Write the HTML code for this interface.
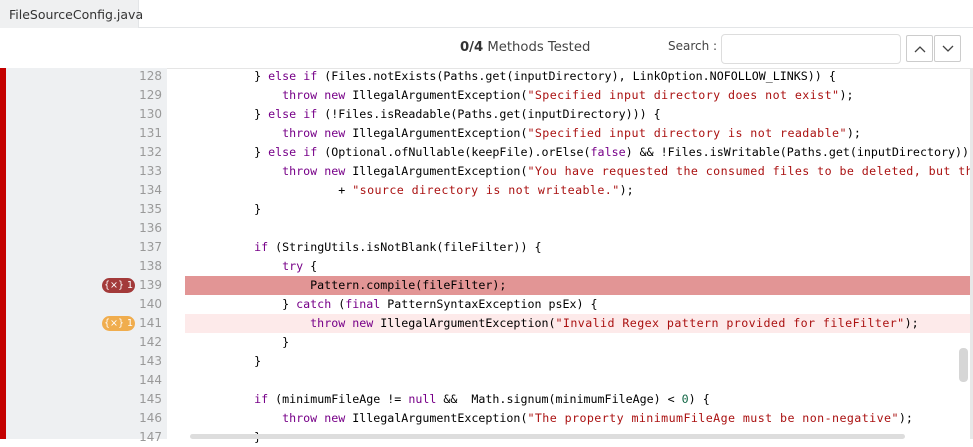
<!DOCTYPE html>
<html><head><meta charset="utf-8">
<style>
*{margin:0;padding:0;box-sizing:border-box}
body{width:973px;height:439px;overflow:hidden;background:#fff;font-family:"Liberation Sans","DejaVu Sans",sans-serif;position:relative}
.tabbar{position:absolute;left:0;top:0;width:973px;height:28px;background:#fff;border-bottom:1px solid #e3e5e7}
.tab{position:absolute;left:0;top:0;width:139px;height:28px;background:#eff0f1;border-right:1px solid #e3e5e7;color:#333;padding:7px 0 0 9px;font-family:"DejaVu Sans",sans-serif;font-size:12.5px}
.title{position:absolute;left:460px;top:40px;font-size:13.2px;color:#444;font-family:"DejaVu Sans",sans-serif}
.title b{color:#333}
.slabel{position:absolute;left:668px;top:39px;font-size:12px;color:#444;font-family:"DejaVu Sans",sans-serif}
.sbox{position:absolute;left:721px;top:34px;width:180px;height:30px;border:1px solid #ddd;border-radius:4px}
.btn{position:absolute;top:35px;width:27px;height:27px;border:1px solid #ccc;border-radius:2px}
.btn svg{position:absolute;left:7px;top:9px}
.hdrline{position:absolute;left:0;top:68px;width:973px;height:1px;background:#e5e5e5}
.redbar{position:absolute;left:0;top:68px;width:6px;height:371px;background:#c40000}
.gutter{position:absolute;left:6px;top:68px;width:161px;height:371px;background:#eef0f2}
.code{position:absolute;left:0;top:67px;width:973px}
.ln{position:relative;height:19px}
.num{position:absolute;right:811px;top:0;line-height:19px;font-family:"DejaVu Sans",sans-serif;font-size:12px;color:#999}
pre{position:absolute;left:170px;top:0;line-height:19px;font-family:"DejaVu Sans Mono",monospace;font-size:11.65px;color:#000}
.k{color:#708}.s{color:#a11;letter-spacing:0.42px}.n{color:#164}
.hl{position:absolute;left:185px;top:0;width:786px;height:19px}
.badge{position:absolute;left:102px;top:2px;width:33px;height:15px;border-radius:8px;color:#fff;font-size:9.5px;line-height:15px;text-align:center;font-family:"DejaVu Sans",sans-serif}
.vs{position:absolute;left:959px;top:348px;width:9px;height:34px;background:#d6d6d6;border-radius:4px}
.hs{position:absolute;left:190px;top:434px;width:715px;height:5px;background:#ddd;border-radius:3px}
.rb{position:absolute;left:970px;top:68px;width:3px;height:371px;background:#e8e8e8}
</style></head><body>
<div class="tabbar"><div class="tab">FileSourceConfig.java</div></div>
<div class="title"><b>0/4</b> Methods Tested</div>
<div class="slabel">Search :</div>
<div class="sbox"></div>
<div class="btn" style="left:906px"><svg width="12" height="8"><path d="M1 7L6 2L11 7" fill="none" stroke="#444" stroke-width="1.3"/></svg></div>
<div class="btn" style="left:934px"><svg width="12" height="8"><path d="M1 1L6 6L11 1" fill="none" stroke="#444" stroke-width="1.3"/></svg></div>
<div class="hdrline"></div>
<div class="redbar"></div>
<div class="gutter"></div>
<div class="code">
<div class="ln"><span class="num">128</span><pre>            } <span class="k">else</span> <span class="k">if</span> (Files.notExists(Paths.get(inputDirectory), LinkOption.NOFOLLOW_LINKS)) {</pre></div>
<div class="ln"><span class="num">129</span><pre>                <span class="k">throw</span> <span class="k">new</span> IllegalArgumentException(<span class="s">"Specified input directory does not exist"</span>);</pre></div>
<div class="ln"><span class="num">130</span><pre>            } <span class="k">else</span> <span class="k">if</span> (!Files.isReadable(Paths.get(inputDirectory))) {</pre></div>
<div class="ln"><span class="num">131</span><pre>                <span class="k">throw</span> <span class="k">new</span> IllegalArgumentException(<span class="s">"Specified input directory is not readable"</span>);</pre></div>
<div class="ln"><span class="num">132</span><pre>            } <span class="k">else</span> <span class="k">if</span> (Optional.ofNullable(keepFile).orElse(<span class="k">false</span>) &amp;&amp; !Files.isWritable(Paths.get(inputDirectory))) {</pre></div>
<div class="ln"><span class="num">133</span><pre>                <span class="k">throw</span> <span class="k">new</span> IllegalArgumentException(<span class="s">"You have requested the consumed files to be deleted, but the "</span></pre></div>
<div class="ln"><span class="num">134</span><pre>                        + <span class="s">"source directory is not writeable."</span>);</pre></div>
<div class="ln"><span class="num">135</span><pre>            }</pre></div>
<div class="ln"><span class="num">136</span></div>
<div class="ln"><span class="num">137</span><pre>            <span class="k">if</span> (StringUtils.isNotBlank(fileFilter)) {</pre></div>
<div class="ln"><span class="num">138</span><pre>                <span class="k">try</span> {</pre></div>
<div class="ln"><div class="hl" style="background:#e29595"></div><div class="badge" style="background:#a33a3a">{×} 1</div><span class="num">139</span><pre>                    Pattern.compile(fileFilter);</pre></div>
<div class="ln"><span class="num">140</span><pre>                } <span class="k">catch</span> (<span class="k">final</span> PatternSyntaxException psEx) {</pre></div>
<div class="ln"><div class="hl" style="background:#fdeaea"></div><div class="badge" style="background:#f0ad4e">{×} 1</div><span class="num">141</span><pre>                    <span class="k">throw</span> <span class="k">new</span> IllegalArgumentException(<span class="s">"Invalid Regex pattern provided for fileFilter"</span>);</pre></div>
<div class="ln"><span class="num">142</span><pre>                }</pre></div>
<div class="ln"><span class="num">143</span><pre>            }</pre></div>
<div class="ln"><span class="num">144</span></div>
<div class="ln"><span class="num">145</span><pre>            <span class="k">if</span> (minimumFileAge != <span class="k">null</span> &amp;&amp;  Math.signum(minimumFileAge) &lt; <span class="n">0</span>) {</pre></div>
<div class="ln"><span class="num">146</span><pre>                <span class="k">throw</span> <span class="k">new</span> IllegalArgumentException(<span class="s">"The property minimumFileAge must be non-negative"</span>);</pre></div>
<div class="ln"><span class="num">147</span><pre>            }</pre></div>
</div>
<div class="rb"></div>
<div class="vs"></div>
<div class="hs"></div>
</body></html>
